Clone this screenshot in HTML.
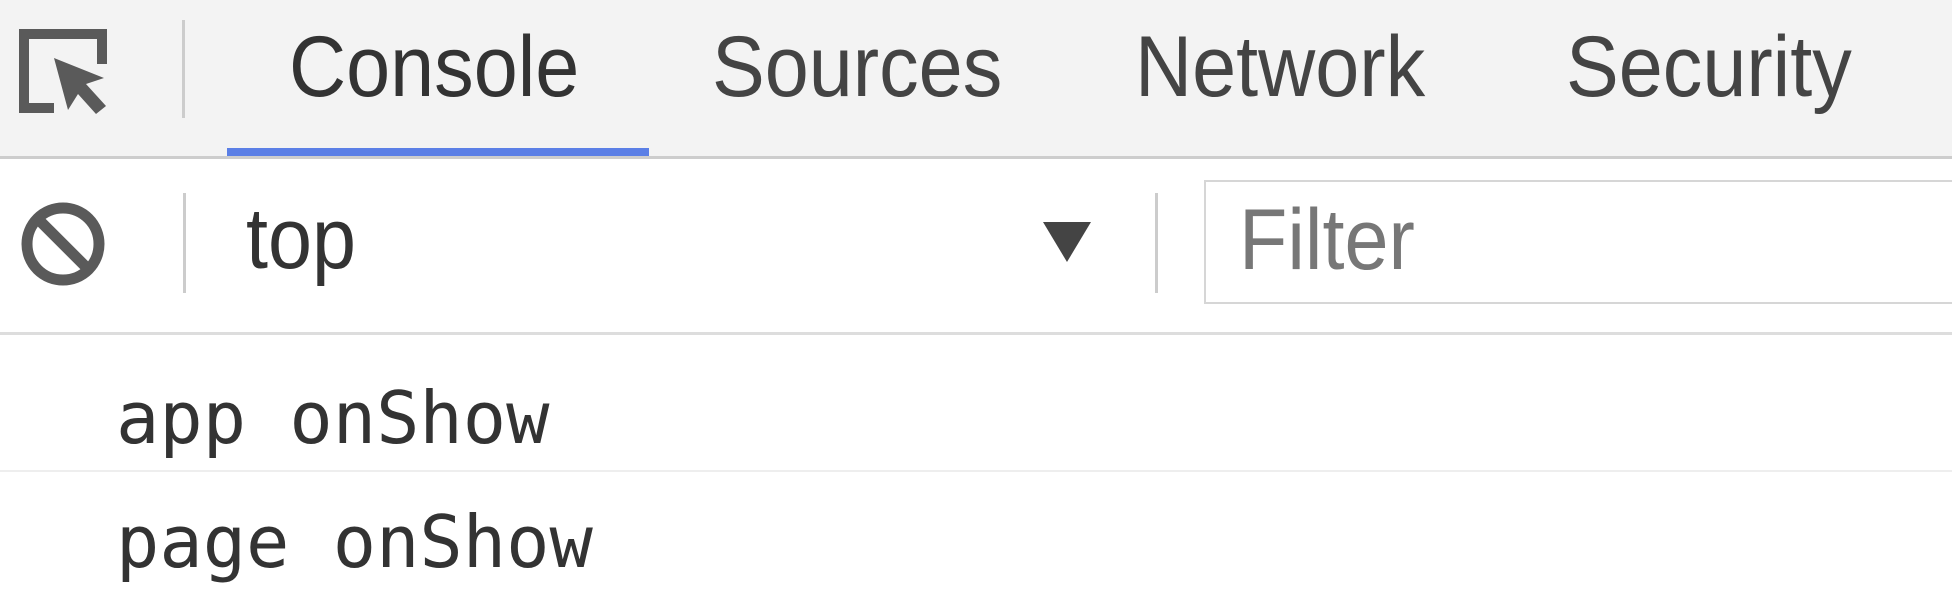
<!DOCTYPE html>
<html><head><style>
html,body{margin:0;padding:0;width:1952px;height:591px;overflow:hidden;background:#fff;font-family:"Liberation Sans",sans-serif;}
.abs{position:absolute;}
.tab{position:absolute;top:24px;font-size:86px;color:#444;line-height:1;white-space:nowrap;transform-origin:left top;transform:scaleX(0.92);}
.mono{position:absolute;font-family:"DejaVu Sans Mono",monospace;font-size:72px;color:#333;line-height:1;white-space:nowrap;}
</style></head><body>
<div class="abs" style="left:0;top:0;width:1952px;height:156px;background:#f3f3f3;"></div>
<div class="abs" style="left:0;top:156px;width:1952px;height:3px;background:#cdcdcd;"></div>
<svg class="abs" style="left:18px;top:28px" width="94" height="88" viewBox="0 0 94 88">
<path d="M36 80 H6 V6 H84 V36" fill="none" stroke="#5a5a5a" stroke-width="10"/>
<path d="M36 30 L86 50 L68 56 L88 78 L78 86 L60 66 L50 82 Z" fill="#5a5a5a"/>
</svg>
<div class="abs" style="left:182px;top:20px;width:3px;height:98px;background:#ccc;"></div>
<div class="tab" style="left:289px;color:#333;">Console</div>
<div class="tab" style="left:712px;">Sources</div>
<div class="tab" style="left:1135px;">Network</div>
<div class="tab" style="left:1566px;">Security</div>
<div class="abs" style="left:227px;top:148px;width:422px;height:8px;background:#5b7fe6;"></div>
<svg class="abs" style="left:19px;top:200px" width="88" height="88" viewBox="0 0 88 88">
<circle cx="44" cy="44" r="36" fill="none" stroke="#5a5a5a" stroke-width="11"/>
<line x1="20" y1="20" x2="68" y2="68" stroke="#5a5a5a" stroke-width="11"/>
</svg>
<div class="abs" style="left:183px;top:193px;width:3px;height:100px;background:#ccc;"></div>
<div class="tab" style="left:246px;top:196px;color:#333;">top</div>
<svg class="abs" style="left:1043px;top:222px" width="48" height="40"><path d="M0 0 H48 L24 40 Z" fill="#444"/></svg>
<div class="abs" style="left:1155px;top:193px;width:3px;height:100px;background:#ccc;"></div>
<div class="abs" style="left:1204px;top:180px;width:760px;height:124px;border:2px solid #d6d6d6;box-sizing:border-box;"></div>
<div class="tab" style="left:1239px;top:197px;color:#777;">Filter</div>
<div class="abs" style="left:0;top:332px;width:1952px;height:3px;background:#ddd;"></div>
<div class="mono" style="left:116px;top:382px;">app onShow</div>
<div class="abs" style="left:0;top:470px;width:1952px;height:2px;background:#eee;"></div>
<div class="mono" style="left:116px;top:506px;">page onShow</div>
</body></html>
